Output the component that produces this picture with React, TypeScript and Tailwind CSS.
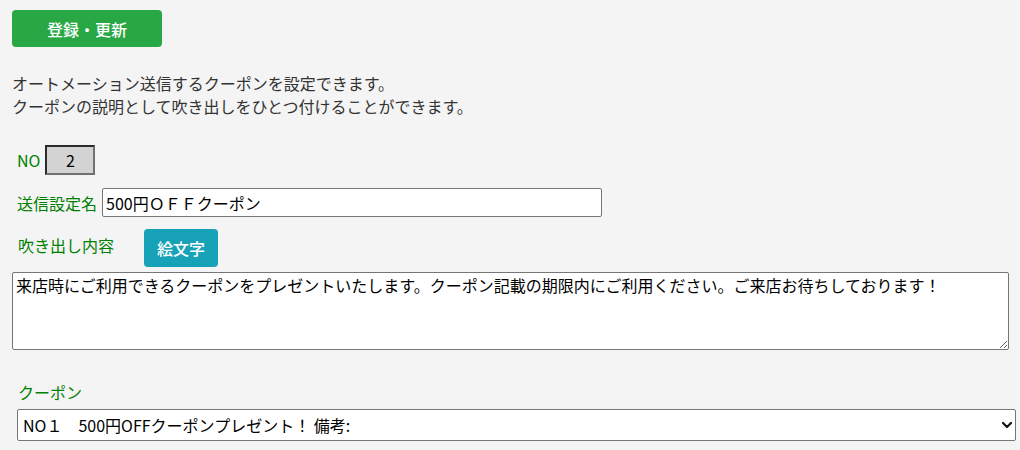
import { useState } from "react";

export default function App() {
  const [name, setName] = useState("500円ＯＦＦクーポン");
  const [body, setBody] = useState(
    "来店時にご利用できるクーポンをプレゼントいたします。クーポン記載の期限内にご利用ください。ご来店お待ちしております！"
  );

  return (
    <div className="min-h-[450px] bg-[#f4f4f4] pl-3 pt-[10px] font-['Noto_Sans_CJK_JP',sans-serif] text-[16px] text-black">
      <button
        type="button"
        className="h-[37px] w-[150px] rounded bg-[#28a745] font-medium text-white"
      >
        登録・更新
      </button>

      <p className="mt-[25px] leading-[23px] text-[#333]">
        オートメーション送信するクーポンを設定できます。
        <br />
        クーポンの説明として吹き出しをひとつ付けることができます。
      </p>

      <div className="mt-[27px] flex items-center pl-[5px]">
        <span className="text-[#008000]">NO</span>
        <div className="ml-[5px] flex h-[30px] w-[50px] items-center justify-center border-2 border-t-[#2a2a2a] border-l-[#2a2a2a] border-r-[#707070] border-b-[#707070] bg-[#d3d3d3]">
          2
        </div>
      </div>

      <div className="mt-[13px] flex items-center pl-[5px]">
        <span className="text-[#008000]">送信設定名</span>
        <input
          value={name}
          onChange={(e) => setName(e.target.value)}
          className="ml-[5px] h-[29px] w-[500px] rounded-[2px] border border-[#767676] bg-white px-[3px] outline-none"
        />
      </div>

      <div className="mt-[12px] flex items-start pl-[6px]">
        <span className="mt-[4px] w-[126px] leading-[24px] text-[#008000]">吹き出し内容</span>
        <button
          type="button"
          className="h-[38px] w-[74px] rounded bg-[#17a2b8] font-medium text-white"
        >
          絵文字
        </button>
      </div>

      <textarea
        value={body}
        onChange={(e) => setBody(e.target.value)}
        className="mt-[5px] block h-[78px] w-[997px] rounded-[2px] border border-[#767676] bg-white px-[3px] py-[1px] leading-[22px] outline-none"
      />

      <div className="mt-[30px] pl-[6px] leading-[24px] text-[#008000]">クーポン</div>

      <div className="relative mt-[5px] ml-[5px] w-[999px]">
        <select className="block h-[32px] w-full appearance-none rounded-[2px] border border-[#767676] bg-white pl-[5px] outline-none">
          <option>NO１　500円OFFクーポンプレゼント！ 備考:</option>
        </select>
        <svg
          className="pointer-events-none absolute right-[3px] top-[11px]"
          width="12"
          height="10"
          viewBox="0 0 12 10"
          fill="none"
        >
          <path d="M2 3l4 4 4-4" stroke="#111" strokeWidth="2.2" strokeLinecap="round" strokeLinejoin="round" />
        </svg>
      </div>
    </div>
  );
}
